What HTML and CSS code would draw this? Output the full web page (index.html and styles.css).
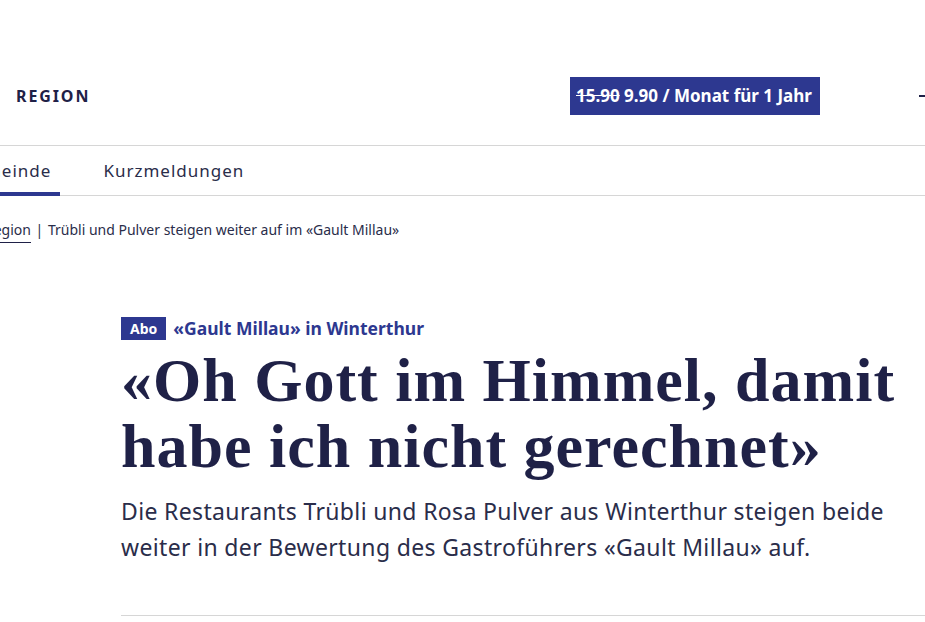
FILE: index.html
```html
<!DOCTYPE html>
<html lang="de">
<head>
    <meta charset="UTF-8">
    <meta name="viewport" content="width=device-width, initial-scale=1.0">
    <title>«Oh Gott im Himmel, damit habe ich nicht gerechnet»</title>
    <link rel="stylesheet" href="styles.css">
</head>
<body>
<header class="topbar">
    <div class="section-name">REGION</div>
    <a class="promo" href="#"><s>15.90</s> 9.90 / Monat für 1 Jahr</a>
    <span class="menu-stub"></span>
</header>

<nav class="tabs">
    <a class="tab active" href="#">Gemeinde</a>
    <a class="tab" href="#">Kurzmeldungen</a>
</nav>

<div class="breadcrumb">
    <a href="#">Region</a>
    <span class="sep">|</span>
    <span>Trübli und Pulver steigen weiter auf im «Gault Millau»</span>
</div>

<article class="article">
    <div class="kicker">
        <span class="abo">Abo</span>
        <span class="kicker-text">«Gault Millau» in Winterthur</span>
    </div>
    <h1>«Oh Gott im Himmel, damit habe ich nicht gerechnet»</h1>
    <p class="lead">Die Restaurants Trübli und Rosa Pulver aus Winterthur steigen beide weiter in der Bewertung des Gastroführers «Gault Millau» auf.</p>
    <hr class="rule">
</article>
</body>
</html>
```

FILE: styles.css
```css
body {
    margin: 0;
    padding: 0;
    font-family: 'Noto Sans', Arial, sans-serif;
    color: #1f2147;
    background-color: #fff;
    overflow: hidden;
}

a {
    color: inherit;
    text-decoration: none;
}

.topbar {
    display: flex;
    align-items: center;
    height: 146px;
    padding: 46px 0 0 16px;
    border-bottom: 1px solid #d6d6d6;
    box-sizing: border-box;
}

.section-name {
    font-size: 16px;
    font-weight: 700;
    letter-spacing: 1.9px;
    flex: 1;
}

.promo {
    display: block;
    background-color: #2d3890;
    color: #fff;
    font-size: 17px;
    font-weight: 700;
    padding: 8px 6px;
    line-height: 22px;
    width: 250px;
    box-sizing: border-box;
    white-space: nowrap;
}

.menu-stub {
    display: block;
    width: 6px;
    height: 2px;
    margin-left: 99px;
    background-color: #1f2147;
}

.tabs {
    display: flex;
    gap: 34px;
    margin-left: -48px;
    height: 49px;
    border-bottom: 1px solid #d6d6d6;
}

.tab {
    display: flex;
    align-items: center;
    padding: 2px 9px 0;
    font-size: 17px;
    letter-spacing: 1px;
    color: #2a2d4a;
    border-bottom: 4px solid transparent;
    margin-bottom: -1px;
}

.tab.active {
    border-bottom-color: #2d3890;
}

.breadcrumb {
    margin: 24px 0 0 -15px;
    font-size: 14px;
    color: #2a2d4a;
    white-space: nowrap;
}

.breadcrumb a {
    border-bottom: 1px solid #1f2147;
    padding-bottom: 3px;
}

.breadcrumb .sep {
    margin: 0 1px;
}

.article {
    padding: 77px 0 0 121px;
}

.kicker {
    display: flex;
    align-items: center;
    gap: 7px;
}

.abo {
    background-color: #2d3890;
    color: #fff;
    font-size: 14px;
    font-weight: 700;
    padding: 2px 9px;
    line-height: 19px;
}

.kicker-text {
    color: #2d3890;
    font-size: 17.5px;
    font-weight: 700;
}

h1 {
    font-family: 'Liberation Serif', 'DejaVu Serif', serif;
    font-size: 62px;
    line-height: 66px;
    letter-spacing: 1px;
    font-weight: 700;
    margin: 7px 0 0;
    color: #1f2147;
    max-width: 800px;
}

.lead {
    font-size: 23px;
    line-height: 36px;
    letter-spacing: 0.35px;
    margin: 14px 0 0;
    color: #2a2d4a;
    max-width: 790px;
}

.rule {
    border: none;
    border-top: 1px solid #d6d6d6;
    margin: 50px 0 0;
}
```
